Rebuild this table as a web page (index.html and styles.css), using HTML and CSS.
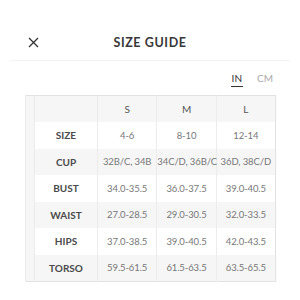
FILE: index.html
```
<!DOCTYPE html>
<html>
<head>
<meta charset="utf-8">
<link rel="stylesheet" href="styles.css">
</head>
<body>
<div class="page">
  <header class="top">
    <svg class="close" width="11" height="11" viewBox="0 0 11 11"><path d="M1 1 L10 10 M10 1 L1 10" stroke="#333" stroke-width="1.3" fill="none"/></svg>
    <h1 class="title">SIZE GUIDE</h1>
  </header>
  <div class="units">
    <span class="unit active">IN</span>
    <span class="unit">CM</span>
  </div>
  <table class="grid">
    <tr class="head"><td class="gut"></td><td class="lab"></td><td>S</td><td>M</td><td>L</td></tr>
    <tr><td class="gut"></td><td class="lab">SIZE</td><td>4-6</td><td>8-10</td><td>12-14</td></tr>
    <tr class="alt"><td class="gut"></td><td class="lab">CUP</td><td>32B/C, 34B</td><td>34C/D, 36B/C</td><td>36D, 38C/D</td></tr>
    <tr><td class="gut"></td><td class="lab">BUST</td><td>34.0-35.5</td><td>36.0-37.5</td><td>39.0-40.5</td></tr>
    <tr class="alt"><td class="gut"></td><td class="lab">WAIST</td><td>27.0-28.5</td><td>29.0-30.5</td><td>32.0-33.5</td></tr>
    <tr><td class="gut"></td><td class="lab">HIPS</td><td>37.0-38.5</td><td>39.0-40.5</td><td>42.0-43.5</td></tr>
    <tr class="alt"><td class="gut"></td><td class="lab">TORSO</td><td>59.5-61.5</td><td>61.5-63.5</td><td>63.5-65.5</td></tr>
  </table>
</div>
</body>
</html>
```
FILE: styles.css
```
html, body {
  margin: 0;
  padding: 0;
  background: #fff;
}
body {
  font-family: Lato, "Noto Sans", sans-serif;
  color: #333;
  width: 300px;
  height: 300px;
  overflow: hidden;
}
.top {
  position: relative;
  height: 61px;
  box-sizing: border-box;
  padding-top: 34px;
  margin: 0 10px;
  border-bottom: 1px solid #f3f3f3;
}
.close {
  position: absolute;
  left: 18px;
  top: 37px;
}
.title {
  margin: 0;
  text-align: center;
  font-size: 12.5px;
  line-height: 18px;
  font-weight: 700;
  letter-spacing: 0.6px;
  color: #383838;
}
.units {
  display: flex;
  justify-content: flex-end;
  gap: 14px;
  padding: 12px 27px 0 0;
  height: 21px;
  box-sizing: border-box;
  margin-top: -1px;
  margin-bottom: 14px;
}
.unit {
  font-size: 10px;
  line-height: 12px;
  color: #aaa;
}
.unit.active {
  color: #333;
  border-bottom: 1.5px solid #333;
  padding: 0 1px 2px;
  height: 12px;
}
.grid {
  margin-left: 25px;
  width: 251px;
  border-collapse: collapse;
  border: 1px solid #e2e2e2;
  table-layout: fixed;
}
.grid td {
  height: 26.5px;
  padding: 0;
  text-align: center;
  font-size: 9.5px;
  letter-spacing: -0.1px;
  color: #777;
  border-left: 1px solid #ececec;
  white-space: nowrap;
}
.grid tr.head td {
  height: 26px;
  background: #f6f6f6;
  color: #555;
  font-size: 10px;
}
.grid tr.alt td {
  background: #f6f6f6;
}
.grid td.gut {
  width: 8px;
  background: #f6f6f6;
}
.grid td.lab {
  width: 62px;
  color: #4a4a4a;
  font-weight: 700;
  font-size: 10px;
  letter-spacing: 0;
}
```
